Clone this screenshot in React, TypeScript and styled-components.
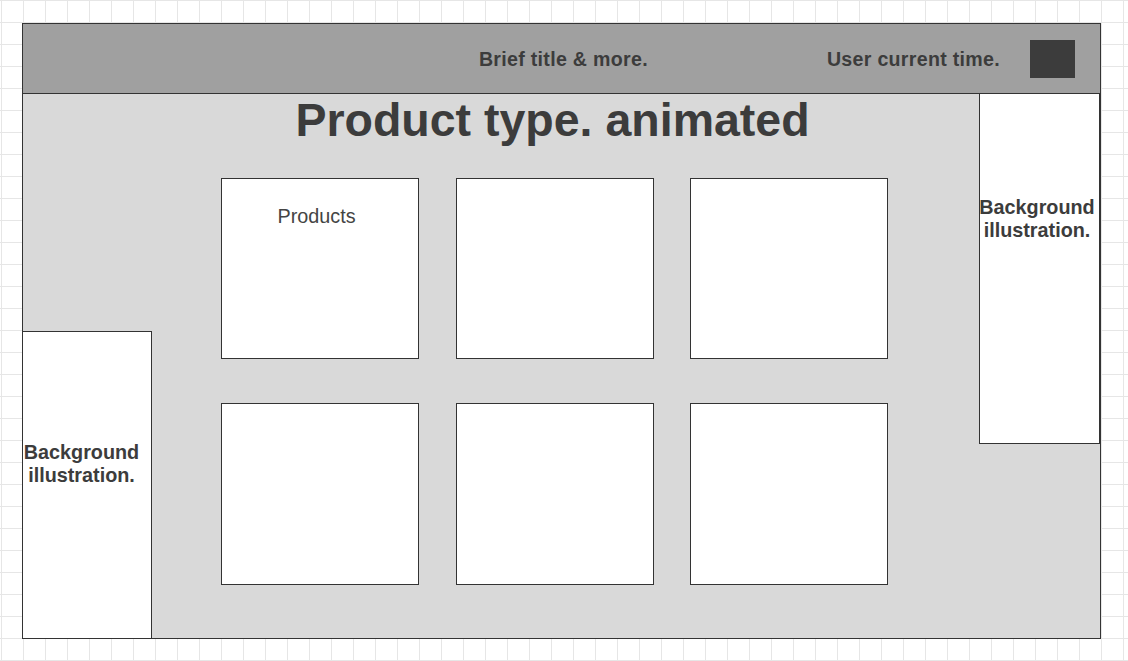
import React from "react";
import styled, { createGlobalStyle } from "styled-components";

const GlobalStyle = createGlobalStyle`
  html, body {
    margin: 0;
    padding: 0;
  }
  body {
    width: 1128px;
    height: 661px;
    overflow: hidden;
    font-family: "Liberation Sans", Arial, sans-serif;
    background-color: #ffffff;
    background-image:
      linear-gradient(to right, #e6e6e6 1px, transparent 1px),
      linear-gradient(to bottom, #e6e6e6 1px, transparent 1px);
    background-size: 22px 22px;
    background-position: 1px 0px;
  }
`;

const Page = styled.div`
  padding: 23px 0 0 22px;
  box-sizing: border-box;
  width: 1128px;
  height: 661px;
`;

const Frame = styled.div`
  width: 1079px;
  height: 616px;
  box-sizing: border-box;
  border: 1px solid #333333;
  display: flex;
  flex-direction: column;
  background: #d9d9d9;
`;

const Header = styled.header`
  height: 70px;
  flex: none;
  box-sizing: border-box;
  border-bottom: 1px solid #333333;
  background: #a0a0a0;
  display: flex;
  align-items: center;
  justify-content: flex-end;
  padding: 1px 25px 0 0;
`;

const HeaderText = styled.span<{ $gapAfter: number }>`
  font-size: 19.6px;
  font-weight: bold;
  letter-spacing: 0.3px;
  color: #3c3c3c;
  margin-right: ${(p) => p.$gapAfter}px;
  line-height: 23px;
`;

const ClockSquare = styled.div`
  width: 45px;
  height: 38px;
  background: #3c3c3c;
  margin-top: -1px;
`;

const Main = styled.main`
  flex: 1;
  display: grid;
  grid-template-columns: 129px 1fr 121px;
  min-height: 0;
`;

const Illustration = styled.div<{ $side: "left" | "right"; $h: number; $pad: number; $shift: number }>`
  box-sizing: border-box;
  background: #ffffff;
  height: ${(p) => p.$h}px;
  align-self: ${(p) => (p.$side === "left" ? "end" : "start")};
  border: 1px solid #333333;
  ${(p) =>
    p.$side === "left"
      ? "border-left: none; border-bottom: none;"
      : "border-top: none;"}
  padding: ${(p) => p.$pad}px ${(p) => p.$shift}px 0 0;
  display: flex;
  justify-content: center;
`;

const IllustrationText = styled.div`
  font-size: 19.8px;
  font-weight: bold;
  line-height: 23px;
  color: #3c3c3c;
  text-align: center;
  white-space: nowrap;
`;

const Center = styled.section`
  display: flex;
  flex-direction: column;
`;

const Title = styled.h1`
  margin: 0;
  padding-right: 26px;
  font-size: 46.5px;
  line-height: 52px;
  font-weight: bold;
  color: #3c3c3c;
  text-align: center;
  white-space: nowrap;
`;

const ProductGrid = styled.div`
  margin: 32px 0 0 69px;
  display: grid;
  grid-template-columns: repeat(3, 198px);
  grid-template-rows: 181px 182px;
  column-gap: 36.5px;
  row-gap: 44px;
`;

const ProductCard = styled.div`
  box-sizing: border-box;
  background: #ffffff;
  border: 1px solid #333333;
  display: flex;
  justify-content: center;
  padding: 26px 7px 0 0;
`;

const CardLabel = styled.span`
  font-size: 19.8px;
  line-height: 23px;
  color: #444444;
  height: 23px;
`;

export default function App() {
  const cards = ["Products", "", "", "", "", ""];
  return (
    <>
      <GlobalStyle />
      <Page>
        <Frame>
          <Header>
            <HeaderText $gapAfter={179}>Brief title &amp; more.</HeaderText>
            <HeaderText $gapAfter={30}>User current time.</HeaderText>
            <ClockSquare />
          </Header>
          <Main>
            <Illustration $side="left" $h={307} $pad={109} $shift={11}>
              <IllustrationText>
                Background
                <br />
                illustration.
              </IllustrationText>
            </Illustration>
            <Center>
              <Title>Product type. animated</Title>
              <ProductGrid>
                {cards.map((c, i) => (
                  <ProductCard key={i}>{c && <CardLabel>{c}</CardLabel>}</ProductCard>
                ))}
              </ProductGrid>
            </Center>
            <Illustration $side="right" $h={350} $pad={102} $shift={5}>
              <IllustrationText>
                Background
                <br />
                illustration.
              </IllustrationText>
            </Illustration>
          </Main>
        </Frame>
      </Page>
    </>
  );
}
